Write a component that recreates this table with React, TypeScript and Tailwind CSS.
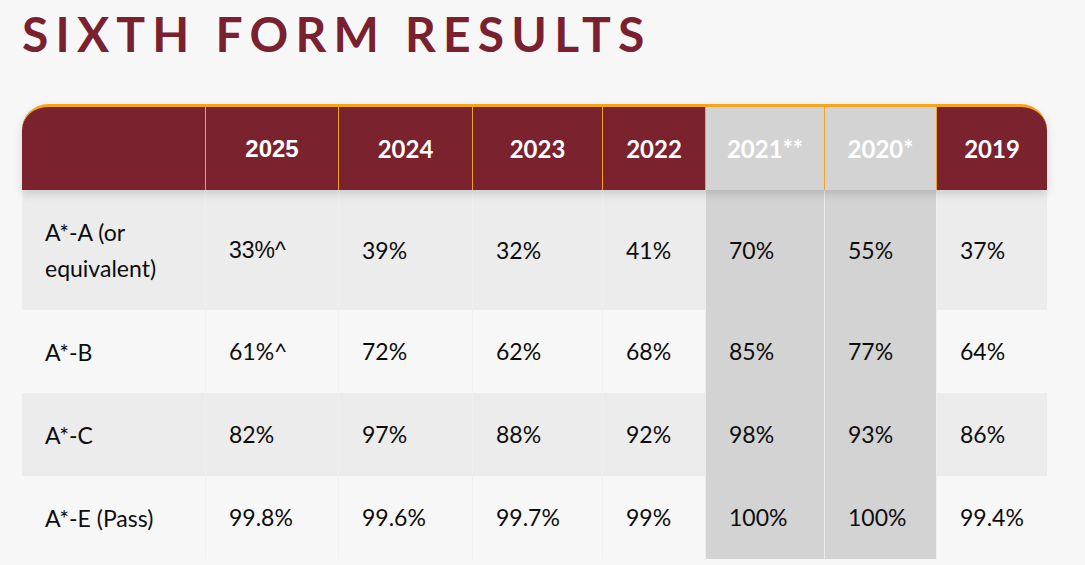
import React from 'react';

const years = [
  { label: '2025', muted: false, arial: true },
  { label: '2024', muted: false },
  { label: '2023', muted: false },
  { label: '2022', muted: false },
  { label: '2021**', muted: true },
  { label: '2020*', muted: true },
  { label: '2019', muted: false },
];

const rows = [
  { grade: 'A*-A (or equivalent)', values: ['33%^', '39%', '32%', '41%', '70%', '55%', '37%'], tall: true, shaded: true },
  { grade: 'A*-B', values: ['61%^', '72%', '62%', '68%', '85%', '77%', '64%'], tall: false, shaded: false },
  { grade: 'A*-C', values: ['82%', '97%', '88%', '92%', '98%', '93%', '86%'], tall: false, shaded: true },
  { grade: 'A*-E (Pass)', values: ['99.8%', '99.6%', '99.7%', '99%', '100%', '100%', '99.4%'], tall: false, shaded: false },
];

const cols = 'grid grid-cols-[183px_133px_134px_130px_103px_119px_112px_111px]';

const App: React.FC = () => {
  return (
    <div className="min-h-[565px] w-full bg-[#f7f7f7] overflow-hidden font-['Lato','Noto_Sans',sans-serif] text-[#0d0d0d]">
      <h1 className="ml-[22px] pt-[5px] text-[48px] leading-[58px] font-bold tracking-[0.15em] text-[#7a2130]">
        SIXTH FORM RESULTS
      </h1>

      <div className="ml-[22px] mt-[41px] w-[1025px]">
        {/* header */}
        <div className={`${cols} relative z-10 h-[86px] rounded-t-[26px] border-t-[3px] border-[#f5a41c] bg-[#7a222e] overflow-hidden shadow-[0_4px_10px_rgba(0,0,0,0.14)]`}>
          <div />
          {years.map((y) => (
            <div
              key={y.label}
              className={`flex items-center justify-center border-l border-[#f5a41c] text-[24px] font-bold text-white ${
                y.muted ? 'bg-[#d3d3d3]' : ''
              } ${y.arial ? "font-['Liberation_Sans',Arial,sans-serif]" : ''}`}
            >
              {y.label}
            </div>
          ))}
        </div>

        {/* body */}
        {rows.map((r) => (
          <div key={r.grade} className={`${cols} ${r.tall ? 'h-[120px]' : 'h-[83px]'} ${r.shaded ? 'bg-[#ececec]' : 'bg-[#f7f7f7]'}`}>
            <div className="flex items-center pl-[23px] pr-[20px] text-[23px] leading-[36px]">{r.grade}</div>
            {r.values.map((v, i) => (
              <div
                key={i}
                className={`flex items-center pl-[23px] text-[23px] border-l ${
                  years[i].muted ? 'bg-[#d3d3d3] border-[#ececec]' : 'border-[#f0f0f0]'
                } ${v === '33%^' ? "font-['Liberation_Sans',Arial,sans-serif] text-[22px]" : ''}`}
              >
                {v}
              </div>
            ))}
          </div>
        ))}
      </div>
    </div>
  );
};

export default App;
